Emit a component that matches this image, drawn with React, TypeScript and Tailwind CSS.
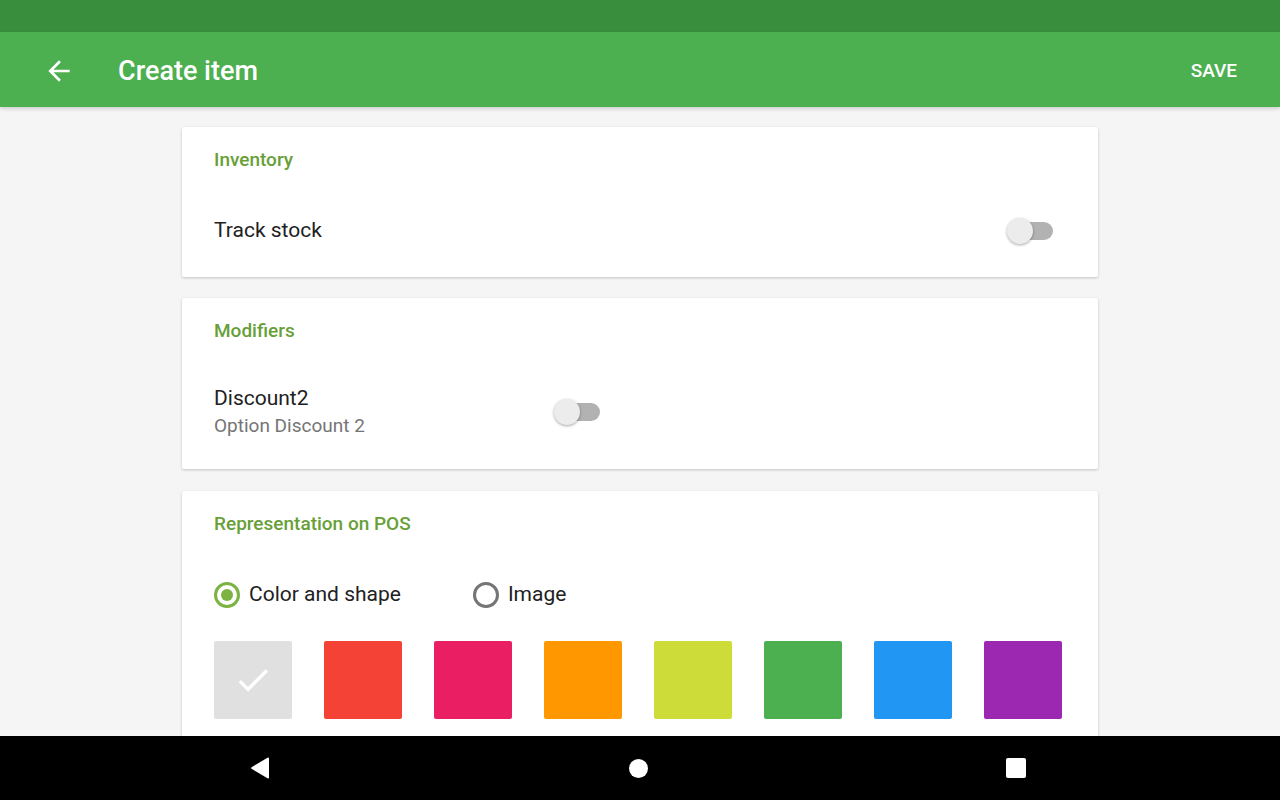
import { useState } from "react";

const swatches = ["#e0e0e0", "#f44336", "#e91e63", "#ff9800", "#cddc39", "#4caf50", "#2196f3", "#9c27b0"];

function Toggle({ on = false }: { on?: boolean }) {
  return (
    <div className="relative h-[26px] w-[48px]">
      <div className="absolute left-[10px] top-[4px] h-[18px] w-[36px] rounded-full bg-[#b2b2b2]" />
      <div
        className={
          "absolute top-0 h-[26px] w-[26px] rounded-full bg-[#ececec] shadow-[0_1px_3px_rgba(0,0,0,0.35)] " +
          (on ? "left-[22px]" : "left-0")
        }
      />
    </div>
  );
}

function Card({ title, children, className }: { title: string; children: React.ReactNode; className?: string }) {
  return (
    <section className={"w-[916px] bg-white px-8 shadow-[0_1px_3px_rgba(0,0,0,0.2)] rounded-[2px] " + (className ?? "")}>
      <h2 className="pt-[21px] text-[19px] font-medium leading-[24px] text-[#689f38]">{title}</h2>
      {children}
    </section>
  );
}

export default function App() {
  const [mode] = useState("color");

  return (
    <div className="flex h-[800px] w-[1280px] flex-col overflow-hidden bg-[#f5f5f5] font-['Roboto',sans-serif]">
      <div className="h-[32px] bg-[#388e3c]" />
      <header className="flex h-[75px] items-center bg-[#4caf50] pl-[43px] pr-[43px] pt-[3px] text-white shadow-[0_2px_4px_rgba(0,0,0,0.15)]">
        <svg width="32" height="32" viewBox="0 0 24 24" className="mr-[43px]">
          <path d="M20 11H7.83l5.59-5.59L12 4l-8 8 8 8 1.41-1.41L7.83 13H20v-2z" fill="white" />
        </svg>
        <h1 className="text-[27px] font-medium">Create item</h1>
        <button className="ml-auto text-[19px] font-medium">SAVE</button>
      </header>

      <main className="flex flex-1 flex-col items-center overflow-hidden pt-[20px]">
        <Card title="Inventory" className="h-[150px] shrink-0">
          <div className="mt-[43px] flex items-center justify-between pr-[11px]">
            <span className="text-[21px] text-[#212121]">Track stock</span>
            <Toggle />
          </div>
        </Card>

        <Card title="Modifiers" className="mt-[21px] h-[171px] shrink-0">
          <div className="mt-[41px] flex items-center gap-[189px]">
            <div>
              <div className="text-[21px] leading-[28px] text-[#212121]">Discount2</div>
              <div className="text-[19px] leading-[28px] text-[#757575]">Option Discount 2</div>
            </div>
            <Toggle />
          </div>
        </Card>

        <Card title="Representation on POS" className="mt-[22px] shrink-0 pb-[30px]">
          <div className="mt-[43px] flex items-center">
            <label className="flex items-center gap-[9px]">
              <span className="flex h-[26px] w-[26px] items-center justify-center rounded-full border-[3px] border-[#7cb342]">
                {mode === "color" && <span className="h-[12px] w-[12px] rounded-full bg-[#7cb342]" />}
              </span>
              <span className="text-[21px] text-[#212121]">Color and shape</span>
            </label>
            <label className="ml-[72px] flex items-center gap-[9px]">
              <span className="h-[26px] w-[26px] rounded-full border-[3px] border-[#757575]" />
              <span className="text-[21px] text-[#212121]">Image</span>
            </label>
          </div>
          <div className="mt-[30px] flex gap-[32px]">
            {swatches.map((c, i) => (
              <div
                key={c}
                className="flex h-[78px] w-[78px] items-center justify-center rounded-[2px]"
                style={{ backgroundColor: c }}
              >
                {i === 0 && (
                  <svg width="40" height="40" viewBox="0 0 24 24">
                    <path d="M9 16.17L4.83 12l-1.42 1.41L9 19 21 7l-1.41-1.41z" fill="white" />
                  </svg>
                )}
              </div>
            ))}
          </div>
        </Card>
      </main>

      <nav className="flex h-[64px] shrink-0 items-center bg-black">
        <div className="flex w-full items-center justify-between pl-[250px] pr-[254px]">
          <svg width="20" height="22" viewBox="0 0 20 22">
            <path d="M19 1.5v19a1 1 0 0 1-1.5.8L1.6 11.8a1 1 0 0 1 0-1.6L17.5.7A1 1 0 0 1 19 1.5z" fill="white" />
          </svg>
          <div className="h-[19px] w-[19px] rounded-full bg-white" />
          <div className="h-[20px] w-[20px] rounded-[2px] bg-white" />
        </div>
      </nav>
    </div>
  );
}
